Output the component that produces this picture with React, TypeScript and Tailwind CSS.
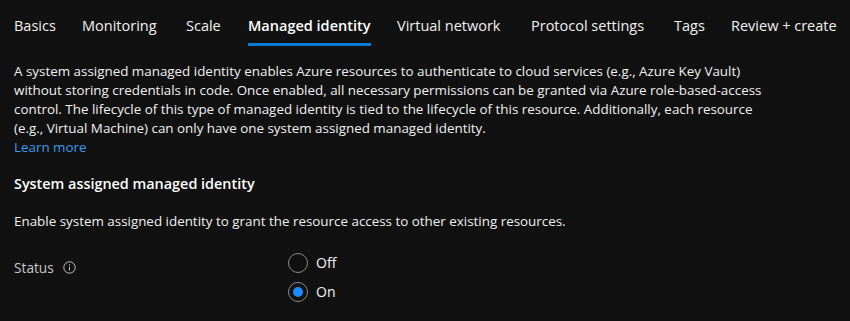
const tabs = [
  { label: "Basics", w: "w-[68px]" },
  { label: "Monitoring", w: "w-[104px]" },
  { label: "Scale", w: "w-[62px]" },
  { label: "Managed identity", w: "w-[149px]", active: true },
  { label: "Virtual network", w: "w-[134px]" },
  { label: "Protocol settings", w: "w-[143px]" },
  { label: "Tags", w: "w-[57px]" },
  { label: "Review + create", w: "w-[112px]" },
];

function InfoIcon() {
  return (
    <svg width="13" height="13" viewBox="0 0 16 16" fill="none" className="text-[#c8c8c8]">
      <circle cx="8" cy="8" r="7" stroke="currentColor" strokeWidth="1.2" />
      <rect x="7.4" y="7" width="1.2" height="4.6" fill="currentColor" />
      <circle cx="8" cy="4.9" r="0.8" fill="currentColor" />
    </svg>
  );
}

function Radio({ label, checked }: { label: string; checked?: boolean }) {
  return (
    <label className="flex items-center gap-[8px] h-[29px]">
      <span className="w-[20px] h-[20px] rounded-full border border-[#8a8a8a] flex items-center justify-center">
        {checked && <span className="w-[10px] h-[10px] rounded-full bg-[#1a8cff]" />}
      </span>
      <span className="text-[#f3f3f3] text-[14px]">{label}</span>
    </label>
  );
}

export default function App() {
  return (
    <div
      className="w-[850px] h-[321px] bg-[#111111] text-[#f0f0f0] text-[13.4px] overflow-hidden"
      style={{ fontFamily: '"Open Sans", "Noto Sans", sans-serif' }}
    >
      <div className="flex pl-[14px] h-[62px] text-[14.5px]">
        {tabs.map((t) => (
          <div key={t.label} className={`${t.w} shrink-0 pt-[15px]`}>
            <span
              className={
                t.active
                  ? "inline-block font-semibold text-white pb-[6px] border-b-[3px] border-[#0a78d6] leading-[22px] whitespace-nowrap"
                  : "inline-block text-[#f0f0f0] leading-[22px] whitespace-nowrap"
              }
            >
              {t.label}
            </span>
          </div>
        ))}
      </div>

      <div className="pl-[14px] pr-[6px] leading-[19px]">
        <p className="whitespace-nowrap">
          A system assigned managed identity enables Azure resources to authenticate to cloud services (e.g., Azure Key Vault)
          <br />
          without storing credentials in code. Once enabled, all necessary permissions can be granted via Azure role-based-access
          <br />
          control. The lifecycle of this type of managed identity is tied to the lifecycle of this resource. Additionally, each resource
          <br />
          (e.g., Virtual Machine) can only have one system assigned managed identity.
        </p>
        <a className="text-[#3899ec]">Learn more</a>

        <h2 className="font-semibold text-white text-[14.4px] mt-[17px] leading-[20px]">System assigned managed identity</h2>
        <p className="mt-[18px]">Enable system assigned identity to grant the resource access to other existing resources.</p>

        <div className="flex mt-[17px]">
          <div className="w-[274px] flex items-start gap-[9px] pt-[10px] text-[#c8c8c8] text-[13.7px]">
            <span className="leading-[19px]">Status</span>
            <span className="h-[19px] flex items-center">
              <InfoIcon />
            </span>
          </div>
          <div className="flex flex-col">
            <Radio label="Off" />
            <Radio label="On" checked />
          </div>
        </div>
      </div>
    </div>
  );
}
